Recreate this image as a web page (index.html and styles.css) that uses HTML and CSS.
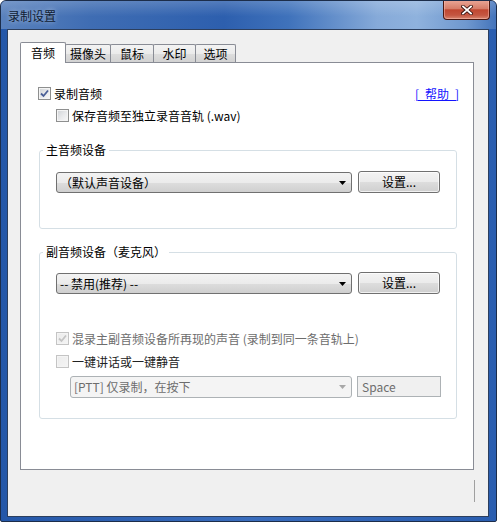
FILE: index.html
```html
<!DOCTYPE html>
<html lang="zh-CN">
<head>
<meta charset="utf-8">
<title>录制设置</title>
<link rel="stylesheet" href="styles.css">
</head>
<body>
<div class="window">
  <div class="titlebar">
    <span class="title">录制设置</span>
    <div class="close">
      <svg width="12" height="10" viewBox="0 0 12 10">
        <path d="M2 1.5 L10 8.5 M10 1.5 L2 8.5" stroke="#3a1410" stroke-width="3.6" stroke-linecap="square" fill="none"/>
        <path d="M2 1.5 L10 8.5 M10 1.5 L2 8.5" stroke="#ffffff" stroke-width="1.8" stroke-linecap="square" fill="none"/>
      </svg>
    </div>
  </div>
  <div class="client">
    <div class="tabs">
      <div class="tab sel t1">音频</div>
      <div class="tab t2">摄像头</div>
      <div class="tab t3">鼠标</div>
      <div class="tab t4">水印</div>
      <div class="tab t5">选项</div>
    </div>
    <div class="panel">
      <div class="row r1">
        <label class="check"><span class="cb"><svg class="tick" width="9" height="9" viewBox="0 0 9 9"><path d="M1 4.5 L3.5 7 L8 1.5" stroke="#4a5f97" stroke-width="1.8" fill="none"/></svg></span>录制音频</label>
        <a class="help" href="#">[&ensp;帮助&ensp;]</a>
      </div>
      <div class="row r2">
        <label class="check"><span class="cb"></span>保存音频至独立录音音轨 (.wav)</label>
      </div>
      <fieldset class="group g1">
        <legend>主音频设备</legend>
        <div class="devrow">
          <div class="combo"><span>（默认声音设备）</span><svg class="arrow" width="7" height="4" viewBox="0 0 7 4"><path d="M0 0 H7 L3.5 4 Z" fill="#000"/></svg></div>
          <div class="btn">设置...</div>
        </div>
      </fieldset>
      <fieldset class="group g2">
        <legend>副音频设备（麦克风）</legend>
        <div class="devrow">
          <div class="combo"><span>-- 禁用(推荐) --</span><svg class="arrow" width="7" height="4" viewBox="0 0 7 4"><path d="M0 0 H7 L3.5 4 Z" fill="#000"/></svg></div>
          <div class="btn">设置...</div>
        </div>
        <div class="row mix">
          <label class="check dis"><span class="cb dis"><svg class="tick" width="9" height="9" viewBox="0 0 9 9"><path d="M1 4.5 L3.5 7 L8 1.5" stroke="#c4c4c4" stroke-width="1.8" fill="none"/></svg></span>混录主副音频设备所再现的声音 (录制到同一条音轨上)</label>
        </div>
        <div class="row ptt">
          <label class="check"><span class="cb dis"></span>一键讲话或一键静音</label>
        </div>
        <div class="pttrow">
          <div class="combo dis"><span>[PTT] 仅录制，在按下</span><svg class="arrow" width="7" height="4" viewBox="0 0 7 4"><path d="M0 0 H7 L3.5 4 Z" fill="#a8a8a8"/></svg></div>
          <div class="keybox">Space</div>
        </div>
      </fieldset>
    </div>
    <div class="status"><span class="grip"></span></div>
  </div>
</div>
</body>
</html>
```
FILE: styles.css
```css
html, body {
  margin: 0;
  padding: 0;
  background: #ffffff;
}
body {
  font-family: "Noto Sans CJK SC", "Liberation Sans", sans-serif;
  font-size: 12px;
  line-height: 14px;
  color: #000;
}
.window {
  width: 497px;
  height: 522px;
  box-sizing: border-box;
  border: 1px solid #1c2d4a;
  border-radius: 6px 6px 2px 2px;
  background: linear-gradient(90deg, #2457a8 0%, #3a6dbd 50%, #2a5eb0 100%);
  display: flex;
  flex-direction: column;
  overflow: hidden;
}
.titlebar {
  height: 28px;
  flex: none;
  display: flex;
  align-items: flex-start;
  justify-content: space-between;
  background:
    linear-gradient(rgba(255,255,255,0.18), rgba(255,255,255,0) 55%),
    linear-gradient(90deg, #5a82bd 0%, #3f6db3 18%, #2d5fae 45%, #3f72bb 58%, #86aad9 76%, #8fb2dd 84%, #6f98cf 94%, #4474bb 100%);
}
.title {
  padding: 8px 0 0 7px;
  line-height: 14px;
  color: #0f1c33;
  text-shadow: 0 0 5px rgba(255,255,255,0.55);
}
.close {
  width: 47px;
  height: 20px;
  margin: -1px 6px 0 0;
  box-sizing: border-box;
  border: 1px solid #4a1710;
  border-top: none;
  border-radius: 0 0 4px 4px;
  background: linear-gradient(#eaa899 0%, #d67d69 45%, #c04731 52%, #c45641 80%, #d88770 100%);
  box-shadow: inset 0 0 0 1px rgba(255,200,190,0.45);
  display: flex;
  align-items: center;
  justify-content: center;
}
.client {
  flex: 1;
  margin: 0 7px 4px 6px;
  border: 1px solid #2c3f5e;
  background: #f0f0f0;
  padding: 12px 0 0 12px;
  display: flex;
  flex-direction: column;
}
.tabs {
  display: flex;
  align-items: flex-end;
  height: 20px;
}
.tab {
  box-sizing: border-box;
  height: 18px;
  border: 1px solid #898c95;
  border-bottom: none;
  border-radius: 2px 2px 0 0;
  margin-left: -1px;
  text-align: center;
  line-height: 17px;
  background: linear-gradient(#f3f3f3 0%, #ebebeb 50%, #dedede 51%, #d2d2d2 100%);
}
.tab.sel {
  height: 21px;
  margin-bottom: -1px;
  margin-left: 0;
  background: #ffffff;
  position: relative;
  z-index: 1;
  line-height: 20px;
}
.t1 { width: 46px; }
.t2 { width: 46px; }
.t3 { width: 44px; }
.t4 { width: 43px; }
.t5 { width: 41px; }
.panel {
  box-sizing: border-box;
  width: 454px;
  height: 408px;
  border: 1px solid #898c95;
  background: #ffffff;
  padding: 0 14px 0 17px;
}
.row {
  display: flex;
  align-items: center;
  height: 13px;
}
.r1 {
  margin-top: 24px;
  justify-content: space-between;
}
.r2 {
  margin-top: 9px;
  padding-left: 18px;
}
.check {
  display: flex;
  align-items: center;
  gap: 3px;
  white-space: nowrap;
}
.check.dis {
  color: #6d6d6d;
}
.cb {
  box-sizing: border-box;
  width: 13px;
  height: 13px;
  border: 1px solid #8e8f8f;
  background: linear-gradient(135deg, #cfd2d6 0%, #e9eaec 55%, #f8f8f8 100%);
  box-shadow: inset 0 0 0 1px #f4f4f4;
  display: flex;
  align-items: center;
  justify-content: center;
}
.cb.dis {
  border-color: #c4c4c4;
  background: linear-gradient(135deg, #ececec 0%, #f4f4f4 100%);
}
.help {
  color: #1414ff;
  text-decoration: underline;
  white-space: pre;
}
.group {
  box-sizing: border-box;
  width: 418px;
  margin: 0 0 0 1px;
  padding: 0;
  border: 1px solid #d5dfe5;
  border-radius: 3px;
  min-width: 0;
}
.group legend {
  padding: 0 3px;
  margin-left: 3px;
  line-height: 14px;
}
.g1 {
  margin-top: 21px;
  padding-bottom: 35px;
}
.g2 {
  margin-top: 16px;
  padding-bottom: 20px;
}
.devrow {
  display: flex;
  align-items: flex-end;
  gap: 6px;
  padding-left: 16px;
}
.g1 .devrow { margin-top: 14px; }
.g2 .devrow { margin-top: 13px; }
.combo {
  box-sizing: border-box;
  width: 296px;
  height: 21px;
  border: 1px solid #707070;
  border-radius: 3px;
  background: linear-gradient(#f3f3f3 0%, #ebebeb 50%, #dddddd 51%, #cfcfcf 100%);
  display: flex;
  align-items: center;
  justify-content: space-between;
  padding: 0 5px 0 3px;
  white-space: nowrap;
}
.btn {
  box-sizing: border-box;
  width: 82px;
  height: 22px;
  border: 1px solid #707070;
  border-radius: 3px;
  background: linear-gradient(#f3f3f3 0%, #ebebeb 50%, #dddddd 51%, #cfcfcf 100%);
  box-shadow: inset 0 0 0 1px rgba(255,255,255,0.7);
  display: flex;
  align-items: center;
  justify-content: center;
}
.mix {
  margin-top: 38px;
  padding-left: 16px;
}
.ptt {
  margin-top: 10px;
  padding-left: 16px;
  color: #222;
}
.pttrow {
  margin-top: 8px;
  padding-left: 30px;
  display: flex;
  align-items: flex-start;
  gap: 5px;
}
.combo.dis {
  width: 282px;
  height: 22px;
  border-color: #adb2b5;
  background: #f4f4f4;
  color: #6d6d6d;
  padding-left: 3px;
}
.keybox {
  box-sizing: border-box;
  width: 84px;
  height: 21px;
  border: 1px solid #adb2b5;
  background: #f0f0f0;
  color: #6d6d6d;
  padding-left: 4px;
  line-height: 19px;
}
.status {
  flex: 1;
  display: flex;
  justify-content: flex-end;
  align-items: flex-start;
  padding: 10px 13px 0 0;
}
.grip {
  width: 1px;
  height: 22px;
  background: #a0a0a0;
}
```
